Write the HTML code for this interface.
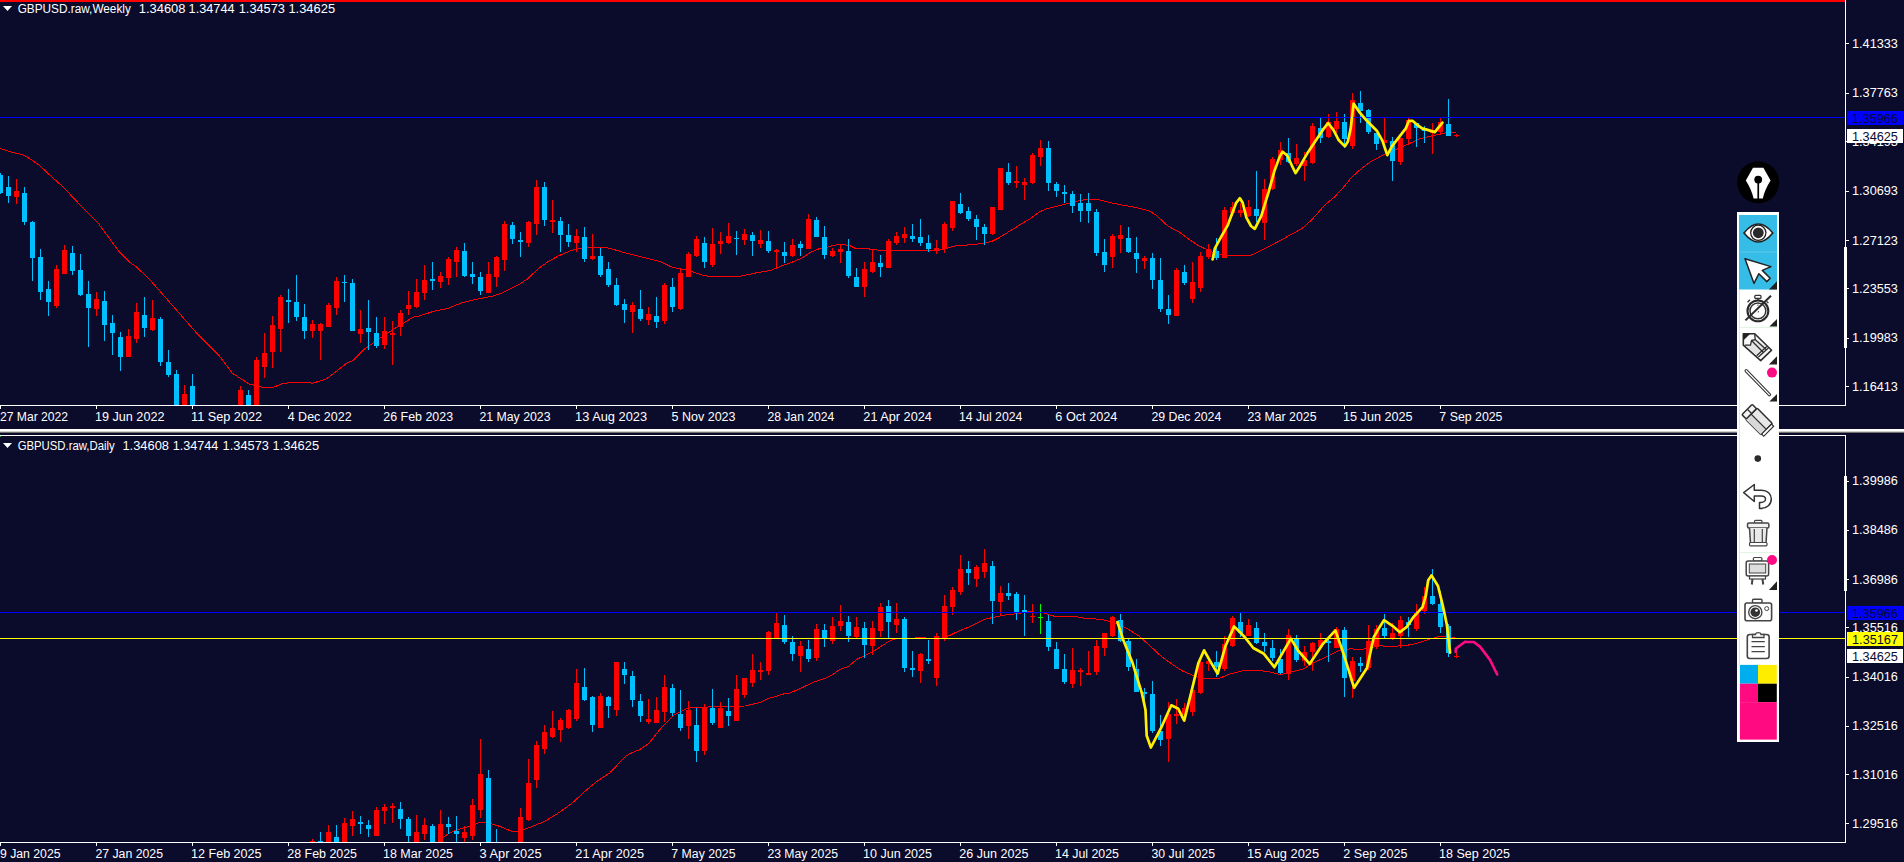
<!DOCTYPE html>
<html><head><meta charset="utf-8"><style>
html,body{margin:0;padding:0;width:1904px;height:862px;overflow:hidden;background:#0b0b2b}
svg{display:block}
text{font-family:"Liberation Sans",sans-serif;font-size:12.3px}
</style></head><body>
<svg width="1904" height="862" viewBox="0 0 1904 862">
<rect width="1904" height="862" fill="#0b0b2b"/>
<g shape-rendering="crispEdges">
<rect x="0" y="0" width="1845" height="2" fill="#ff0000"/>
</g>
<g>
<polyline points="0.0,148.4 11.1,152.1 22.3,154.5 29.7,158.6 39.0,165.0 52.0,177.1 60.3,184.5 68.7,192.9 84.5,209.6 98.4,223.5 111.4,241.2 119.7,252.3 129.9,262.5 135.5,266.2 148.5,278.3 160.0,291.3 180.5,314.7 197.8,334.4 212.6,349.3 219.2,355.9 232.4,373.2 248.8,383.9 262.0,387.2 273.5,387.2 281.8,383.9 291.7,382.2 313.1,383.1 326.2,379.0 336.1,371.5 347.6,362.5 352.6,360.8 364.1,349.3 380.6,337.8 397.0,327.0 413.5,317.1 420.0,315.8 433.9,311.2 447.8,308.4 461.8,302.8 475.7,299.4 493.8,295.9 503.5,292.4 517.5,285.4 527.2,279.2 538.3,268.7 548.1,261.5 559.2,255.5 573.1,249.9 581.5,248.3 588.5,247.4 603.8,247.4 610.7,248.5 621.9,252.0 635.8,255.5 649.7,259.0 660.0,261.4 672.5,267.4 685.1,269.8 694.8,272.6 704.5,275.8 710.1,276.3 739.4,276.3 757.5,272.6 771.4,270.2 781.1,266.0 792.3,262.1 802.0,258.0 810.4,252.4 818.7,248.9 827.1,247.5 832.6,245.4 841.0,244.3 849.3,245.4 854.9,248.2 868.8,248.9 878.6,250.3 900.0,250.3 939.0,250.3 947.3,248.2 955.7,245.7 972.4,244.7 983.5,243.3 991.9,241.3 1000.2,237.1 1011.4,230.1 1022.5,223.2 1030.9,218.3 1039.2,212.0 1047.6,208.5 1055.9,206.5 1067.1,203.7 1075.4,201.6 1086.5,199.2 1097.7,199.5 1108.8,202.3 1122.8,205.1 1140.0,208.3 1149.7,211.2 1156.2,215.3 1167.6,225.8 1180.6,233.1 1188.7,239.1 1198.5,245.6 1208.2,250.2 1218.0,254.7 1227.7,255.4 1250.4,255.4 1256.9,252.6 1269.9,246.1 1286.2,237.2 1302.4,228.3 1312.2,219.3 1325.2,204.7 1334.9,196.6 1344.6,186.0 1351.1,177.9 1360.9,169.0 1370.6,161.7 1380.0,156.8 1382.6,155.1 1394.2,150.4 1407.0,144.6 1419.8,138.8 1431.4,135.9 1445.3,133.0 1455.7,132.5" fill="none" stroke="#ff0000" stroke-width="1" stroke-linejoin="round" stroke-linecap="round" shape-rendering="crispEdges"/>
<polyline points="443.2,837.6 448.9,833.3 456.5,830.0 467.8,826.7 474.4,824.8 480.1,822.2 484.8,822.5 491.4,823.9 500.9,826.7 512.2,831.6 517.0,831.2 529.2,827.7 543.4,822.0 557.6,813.5 567.1,806.9 573.7,801.7 586.0,790.3 598.2,780.4 610.0,772.8 612.5,770.0 625.1,756.8 629.2,754.0 639.0,749.9 648.7,743.6 658.5,731.1 664.0,724.8 673.8,715.1 680.7,711.6 687.7,708.1 701.6,707.4 716.9,706.4 733.6,706.4 744.8,706.0 760.1,702.5 767.1,699.0 785.2,693.5 790.0,693.0 803.9,686.8 815.1,681.6 824.8,678.4 831.8,675.2 838.7,670.0 848.5,666.3 856.8,659.3 865.2,655.4 873.5,651.3 887.5,642.2 895.5,638.5 915.5,638.5 916.0,637.5 925.0,637.5 925.5,638.5 946.0,638.5 947.3,636.5 957.1,631.8 971.0,626.2 984.9,619.2 1005.8,614.8 1015.5,613.9 1030.0,611.6 1043.9,613.0 1055.1,616.5 1075.9,616.5 1085.7,618.5 1099.6,619.2 1108.0,620.9 1119.1,624.1 1130.2,630.4 1138.6,635.9 1148.3,644.3 1160.9,656.1 1173.4,665.2 1183.1,671.4 1197.1,677.0 1202.6,678.4 1219.3,678.4 1229.1,674.2 1245.8,670.0 1259.7,670.5 1270.0,672.0 1280.5,674.6 1291.0,672.0 1303.6,668.8 1314.1,662.5 1327.8,656.2 1338.3,651.0 1349.8,648.9 1362.4,649.4 1375.0,646.8 1380.3,645.7 1390.8,646.8 1401.3,645.7 1411.8,644.7 1419.2,642.6 1430.7,638.9 1438.1,636.8 1448.6,636.8 1454.9,637.5" fill="none" stroke="#ff0000" stroke-width="1" stroke-linejoin="round" stroke-linecap="round" shape-rendering="crispEdges"/>
</g>
<g shape-rendering="crispEdges">
<rect x="0" y="173" width="1" height="21" fill="#00bfff"/>
<rect x="-2" y="175" width="5" height="18" fill="#00bfff"/>
<rect x="8" y="176" width="1" height="27" fill="#00bfff"/>
<rect x="6" y="187" width="5" height="9" fill="#00bfff"/>
<rect x="16" y="179" width="1" height="25" fill="#ff0000"/>
<rect x="14" y="191" width="5" height="6" fill="#ff0000"/>
<rect x="24" y="187" width="1" height="38" fill="#00bfff"/>
<rect x="22" y="193" width="5" height="29" fill="#00bfff"/>
<rect x="32" y="221" width="1" height="60" fill="#00bfff"/>
<rect x="30" y="222" width="5" height="36" fill="#00bfff"/>
<rect x="40" y="249" width="1" height="51" fill="#00bfff"/>
<rect x="38" y="257" width="5" height="35" fill="#00bfff"/>
<rect x="48" y="281" width="1" height="35" fill="#00bfff"/>
<rect x="46" y="289" width="5" height="13" fill="#00bfff"/>
<rect x="56" y="265" width="1" height="43" fill="#ff0000"/>
<rect x="54" y="269" width="5" height="37" fill="#ff0000"/>
<rect x="64" y="245" width="1" height="29" fill="#ff0000"/>
<rect x="62" y="250" width="5" height="24" fill="#ff0000"/>
<rect x="72" y="246" width="1" height="29" fill="#00bfff"/>
<rect x="70" y="253" width="5" height="18" fill="#00bfff"/>
<rect x="80" y="254" width="1" height="42" fill="#00bfff"/>
<rect x="78" y="270" width="5" height="25" fill="#00bfff"/>
<rect x="88" y="281" width="1" height="66" fill="#00bfff"/>
<rect x="86" y="294" width="5" height="14" fill="#00bfff"/>
<rect x="96" y="292" width="1" height="24" fill="#ff0000"/>
<rect x="94" y="299" width="5" height="10" fill="#ff0000"/>
<rect x="104" y="291" width="1" height="50" fill="#00bfff"/>
<rect x="102" y="301" width="5" height="24" fill="#00bfff"/>
<rect x="112" y="315" width="1" height="40" fill="#00bfff"/>
<rect x="110" y="323" width="5" height="10" fill="#00bfff"/>
<rect x="120" y="332" width="1" height="39" fill="#00bfff"/>
<rect x="118" y="337" width="5" height="20" fill="#00bfff"/>
<rect x="128" y="329" width="1" height="28" fill="#ff0000"/>
<rect x="126" y="336" width="5" height="21" fill="#ff0000"/>
<rect x="136" y="303" width="1" height="40" fill="#ff0000"/>
<rect x="134" y="312" width="5" height="27" fill="#ff0000"/>
<rect x="144" y="297" width="1" height="40" fill="#00bfff"/>
<rect x="142" y="315" width="5" height="13" fill="#00bfff"/>
<rect x="152" y="300" width="1" height="31" fill="#ff0000"/>
<rect x="150" y="318" width="5" height="12" fill="#ff0000"/>
<rect x="160" y="317" width="1" height="49" fill="#00bfff"/>
<rect x="158" y="319" width="5" height="43" fill="#00bfff"/>
<rect x="168" y="350" width="1" height="27" fill="#00bfff"/>
<rect x="166" y="362" width="5" height="13" fill="#00bfff"/>
<rect x="176" y="370" width="1" height="35" fill="#00bfff"/>
<rect x="174" y="374" width="5" height="31" fill="#00bfff"/>
<rect x="184" y="385" width="1" height="20" fill="#ff0000"/>
<rect x="182" y="394" width="5" height="11" fill="#ff0000"/>
<rect x="192" y="374" width="1" height="31" fill="#00bfff"/>
<rect x="190" y="386" width="5" height="19" fill="#00bfff"/>
<rect x="240" y="386" width="1" height="19" fill="#ff0000"/>
<rect x="238" y="390" width="5" height="15" fill="#ff0000"/>
<rect x="248" y="390" width="1" height="15" fill="#00bfff"/>
<rect x="246" y="395" width="5" height="10" fill="#00bfff"/>
<rect x="256" y="357" width="1" height="48" fill="#ff0000"/>
<rect x="254" y="360" width="5" height="45" fill="#ff0000"/>
<rect x="264" y="333" width="1" height="45" fill="#ff0000"/>
<rect x="262" y="353" width="5" height="14" fill="#ff0000"/>
<rect x="272" y="316" width="1" height="52" fill="#ff0000"/>
<rect x="270" y="325" width="5" height="27" fill="#ff0000"/>
<rect x="280" y="295" width="1" height="57" fill="#ff0000"/>
<rect x="278" y="297" width="5" height="32" fill="#ff0000"/>
<rect x="288" y="289" width="1" height="34" fill="#00bfff"/>
<rect x="286" y="300" width="5" height="2" fill="#00bfff"/>
<rect x="296" y="275" width="1" height="46" fill="#00bfff"/>
<rect x="294" y="302" width="5" height="15" fill="#00bfff"/>
<rect x="304" y="304" width="1" height="35" fill="#00bfff"/>
<rect x="302" y="317" width="5" height="14" fill="#00bfff"/>
<rect x="312" y="320" width="1" height="18" fill="#ff0000"/>
<rect x="310" y="324" width="5" height="7" fill="#ff0000"/>
<rect x="320" y="323" width="1" height="37" fill="#ff0000"/>
<rect x="318" y="324" width="5" height="7" fill="#ff0000"/>
<rect x="328" y="303" width="1" height="24" fill="#ff0000"/>
<rect x="326" y="305" width="5" height="22" fill="#ff0000"/>
<rect x="336" y="277" width="1" height="38" fill="#ff0000"/>
<rect x="334" y="281" width="5" height="27" fill="#ff0000"/>
<rect x="344" y="275" width="1" height="27" fill="#00bfff"/>
<rect x="342" y="282" width="5" height="1" fill="#00bfff"/>
<rect x="352" y="279" width="1" height="52" fill="#00bfff"/>
<rect x="350" y="283" width="5" height="48" fill="#00bfff"/>
<rect x="360" y="310" width="1" height="33" fill="#ff0000"/>
<rect x="358" y="329" width="5" height="5" fill="#ff0000"/>
<rect x="368" y="300" width="1" height="50" fill="#00bfff"/>
<rect x="366" y="328" width="5" height="4" fill="#00bfff"/>
<rect x="376" y="317" width="1" height="31" fill="#00bfff"/>
<rect x="374" y="333" width="5" height="13" fill="#00bfff"/>
<rect x="384" y="317" width="1" height="32" fill="#ff0000"/>
<rect x="382" y="331" width="5" height="14" fill="#ff0000"/>
<rect x="392" y="321" width="1" height="44" fill="#ff0000"/>
<rect x="390" y="333" width="5" height="2" fill="#ff0000"/>
<rect x="400" y="310" width="1" height="26" fill="#ff0000"/>
<rect x="398" y="313" width="5" height="14" fill="#ff0000"/>
<rect x="408" y="291" width="1" height="24" fill="#ff0000"/>
<rect x="406" y="305" width="5" height="4" fill="#ff0000"/>
<rect x="416" y="279" width="1" height="29" fill="#ff0000"/>
<rect x="414" y="292" width="5" height="15" fill="#ff0000"/>
<rect x="424" y="265" width="1" height="35" fill="#ff0000"/>
<rect x="422" y="280" width="5" height="13" fill="#ff0000"/>
<rect x="432" y="262" width="1" height="28" fill="#00bfff"/>
<rect x="430" y="279" width="5" height="2" fill="#00bfff"/>
<rect x="440" y="272" width="1" height="16" fill="#ff0000"/>
<rect x="438" y="276" width="5" height="6" fill="#ff0000"/>
<rect x="448" y="257" width="1" height="28" fill="#ff0000"/>
<rect x="446" y="259" width="5" height="19" fill="#ff0000"/>
<rect x="456" y="247" width="1" height="30" fill="#ff0000"/>
<rect x="454" y="250" width="5" height="12" fill="#ff0000"/>
<rect x="464" y="243" width="1" height="34" fill="#00bfff"/>
<rect x="462" y="251" width="5" height="25" fill="#00bfff"/>
<rect x="472" y="262" width="1" height="22" fill="#00bfff"/>
<rect x="470" y="274" width="5" height="3" fill="#00bfff"/>
<rect x="480" y="272" width="1" height="23" fill="#00bfff"/>
<rect x="478" y="277" width="5" height="14" fill="#00bfff"/>
<rect x="488" y="262" width="1" height="31" fill="#ff0000"/>
<rect x="486" y="274" width="5" height="19" fill="#ff0000"/>
<rect x="496" y="256" width="1" height="31" fill="#ff0000"/>
<rect x="494" y="257" width="5" height="20" fill="#ff0000"/>
<rect x="504" y="221" width="1" height="50" fill="#ff0000"/>
<rect x="502" y="224" width="5" height="36" fill="#ff0000"/>
<rect x="512" y="222" width="1" height="22" fill="#00bfff"/>
<rect x="510" y="225" width="5" height="14" fill="#00bfff"/>
<rect x="520" y="232" width="1" height="25" fill="#00bfff"/>
<rect x="518" y="240" width="5" height="2" fill="#00bfff"/>
<rect x="528" y="221" width="1" height="26" fill="#ff0000"/>
<rect x="526" y="222" width="5" height="21" fill="#ff0000"/>
<rect x="536" y="180" width="1" height="55" fill="#ff0000"/>
<rect x="534" y="187" width="5" height="37" fill="#ff0000"/>
<rect x="544" y="182" width="1" height="44" fill="#00bfff"/>
<rect x="542" y="187" width="5" height="33" fill="#00bfff"/>
<rect x="552" y="200" width="1" height="33" fill="#ff0000"/>
<rect x="550" y="220" width="5" height="2" fill="#ff0000"/>
<rect x="560" y="217" width="1" height="35" fill="#00bfff"/>
<rect x="558" y="221" width="5" height="14" fill="#00bfff"/>
<rect x="568" y="224" width="1" height="23" fill="#00bfff"/>
<rect x="566" y="235" width="5" height="7" fill="#00bfff"/>
<rect x="576" y="229" width="1" height="23" fill="#ff0000"/>
<rect x="574" y="236" width="5" height="7" fill="#ff0000"/>
<rect x="584" y="227" width="1" height="35" fill="#00bfff"/>
<rect x="582" y="237" width="5" height="22" fill="#00bfff"/>
<rect x="592" y="234" width="1" height="26" fill="#ff0000"/>
<rect x="590" y="256" width="5" height="3" fill="#ff0000"/>
<rect x="600" y="248" width="1" height="29" fill="#00bfff"/>
<rect x="598" y="256" width="5" height="19" fill="#00bfff"/>
<rect x="608" y="262" width="1" height="25" fill="#00bfff"/>
<rect x="606" y="269" width="5" height="16" fill="#00bfff"/>
<rect x="616" y="278" width="1" height="28" fill="#00bfff"/>
<rect x="614" y="285" width="5" height="20" fill="#00bfff"/>
<rect x="624" y="299" width="1" height="24" fill="#00bfff"/>
<rect x="622" y="304" width="5" height="6" fill="#00bfff"/>
<rect x="632" y="302" width="1" height="31" fill="#ff0000"/>
<rect x="630" y="305" width="5" height="7" fill="#ff0000"/>
<rect x="640" y="290" width="1" height="31" fill="#00bfff"/>
<rect x="638" y="309" width="5" height="10" fill="#00bfff"/>
<rect x="648" y="307" width="1" height="18" fill="#ff0000"/>
<rect x="646" y="314" width="5" height="6" fill="#ff0000"/>
<rect x="656" y="297" width="1" height="31" fill="#00bfff"/>
<rect x="654" y="316" width="5" height="6" fill="#00bfff"/>
<rect x="664" y="283" width="1" height="41" fill="#ff0000"/>
<rect x="662" y="285" width="5" height="36" fill="#ff0000"/>
<rect x="672" y="278" width="1" height="34" fill="#00bfff"/>
<rect x="670" y="287" width="5" height="20" fill="#00bfff"/>
<rect x="680" y="268" width="1" height="42" fill="#ff0000"/>
<rect x="678" y="273" width="5" height="36" fill="#ff0000"/>
<rect x="688" y="252" width="1" height="25" fill="#ff0000"/>
<rect x="686" y="254" width="5" height="23" fill="#ff0000"/>
<rect x="696" y="236" width="1" height="21" fill="#ff0000"/>
<rect x="694" y="239" width="5" height="17" fill="#ff0000"/>
<rect x="704" y="237" width="1" height="31" fill="#00bfff"/>
<rect x="702" y="243" width="5" height="19" fill="#00bfff"/>
<rect x="712" y="228" width="1" height="39" fill="#ff0000"/>
<rect x="710" y="244" width="5" height="21" fill="#ff0000"/>
<rect x="720" y="232" width="1" height="22" fill="#ff0000"/>
<rect x="718" y="241" width="5" height="3" fill="#ff0000"/>
<rect x="728" y="223" width="1" height="21" fill="#ff0000"/>
<rect x="726" y="236" width="5" height="7" fill="#ff0000"/>
<rect x="736" y="231" width="1" height="24" fill="#00bfff"/>
<rect x="734" y="238" width="5" height="1" fill="#00bfff"/>
<rect x="744" y="229" width="1" height="16" fill="#ff0000"/>
<rect x="742" y="234" width="5" height="6" fill="#ff0000"/>
<rect x="752" y="232" width="1" height="24" fill="#00bfff"/>
<rect x="750" y="235" width="5" height="6" fill="#00bfff"/>
<rect x="760" y="230" width="1" height="18" fill="#ff0000"/>
<rect x="758" y="240" width="5" height="4" fill="#ff0000"/>
<rect x="768" y="231" width="1" height="22" fill="#00bfff"/>
<rect x="766" y="241" width="5" height="10" fill="#00bfff"/>
<rect x="776" y="249" width="1" height="18" fill="#ff0000"/>
<rect x="774" y="250" width="5" height="2" fill="#ff0000"/>
<rect x="784" y="242" width="1" height="21" fill="#00bfff"/>
<rect x="782" y="252" width="5" height="4" fill="#00bfff"/>
<rect x="792" y="239" width="1" height="18" fill="#ff0000"/>
<rect x="790" y="245" width="5" height="11" fill="#ff0000"/>
<rect x="800" y="241" width="1" height="15" fill="#00bfff"/>
<rect x="798" y="244" width="5" height="4" fill="#00bfff"/>
<rect x="808" y="214" width="1" height="35" fill="#ff0000"/>
<rect x="806" y="219" width="5" height="30" fill="#ff0000"/>
<rect x="816" y="217" width="1" height="20" fill="#00bfff"/>
<rect x="814" y="220" width="5" height="17" fill="#00bfff"/>
<rect x="824" y="226" width="1" height="33" fill="#00bfff"/>
<rect x="822" y="237" width="5" height="18" fill="#00bfff"/>
<rect x="832" y="248" width="1" height="9" fill="#ff0000"/>
<rect x="830" y="251" width="5" height="5" fill="#ff0000"/>
<rect x="840" y="244" width="1" height="19" fill="#ff0000"/>
<rect x="838" y="249" width="5" height="3" fill="#ff0000"/>
<rect x="848" y="239" width="1" height="39" fill="#00bfff"/>
<rect x="846" y="251" width="5" height="25" fill="#00bfff"/>
<rect x="856" y="268" width="1" height="19" fill="#00bfff"/>
<rect x="854" y="277" width="5" height="10" fill="#00bfff"/>
<rect x="864" y="262" width="1" height="35" fill="#ff0000"/>
<rect x="862" y="269" width="5" height="18" fill="#ff0000"/>
<rect x="872" y="249" width="1" height="24" fill="#ff0000"/>
<rect x="870" y="262" width="5" height="10" fill="#ff0000"/>
<rect x="880" y="255" width="1" height="22" fill="#00bfff"/>
<rect x="878" y="263" width="5" height="4" fill="#00bfff"/>
<rect x="888" y="239" width="1" height="29" fill="#ff0000"/>
<rect x="886" y="241" width="5" height="27" fill="#ff0000"/>
<rect x="896" y="232" width="1" height="13" fill="#ff0000"/>
<rect x="894" y="236" width="5" height="7" fill="#ff0000"/>
<rect x="904" y="227" width="1" height="16" fill="#ff0000"/>
<rect x="902" y="234" width="5" height="4" fill="#ff0000"/>
<rect x="912" y="224" width="1" height="18" fill="#00bfff"/>
<rect x="910" y="236" width="5" height="3" fill="#00bfff"/>
<rect x="920" y="219" width="1" height="27" fill="#00bfff"/>
<rect x="918" y="237" width="5" height="6" fill="#00bfff"/>
<rect x="928" y="235" width="1" height="17" fill="#00bfff"/>
<rect x="926" y="243" width="5" height="6" fill="#00bfff"/>
<rect x="936" y="240" width="1" height="14" fill="#ff0000"/>
<rect x="934" y="248" width="5" height="3" fill="#ff0000"/>
<rect x="944" y="222" width="1" height="31" fill="#ff0000"/>
<rect x="942" y="224" width="5" height="25" fill="#ff0000"/>
<rect x="952" y="201" width="1" height="30" fill="#ff0000"/>
<rect x="950" y="201" width="5" height="27" fill="#ff0000"/>
<rect x="960" y="193" width="1" height="21" fill="#00bfff"/>
<rect x="958" y="204" width="5" height="9" fill="#00bfff"/>
<rect x="968" y="207" width="1" height="14" fill="#00bfff"/>
<rect x="966" y="211" width="5" height="8" fill="#00bfff"/>
<rect x="976" y="215" width="1" height="25" fill="#00bfff"/>
<rect x="974" y="219" width="5" height="8" fill="#00bfff"/>
<rect x="984" y="224" width="1" height="21" fill="#00bfff"/>
<rect x="982" y="227" width="5" height="7" fill="#00bfff"/>
<rect x="992" y="207" width="1" height="28" fill="#ff0000"/>
<rect x="990" y="207" width="5" height="27" fill="#ff0000"/>
<rect x="1000" y="168" width="1" height="42" fill="#ff0000"/>
<rect x="998" y="168" width="5" height="42" fill="#ff0000"/>
<rect x="1008" y="163" width="1" height="22" fill="#00bfff"/>
<rect x="1006" y="172" width="5" height="11" fill="#00bfff"/>
<rect x="1016" y="166" width="1" height="22" fill="#ff0000"/>
<rect x="1014" y="181" width="5" height="2" fill="#ff0000"/>
<rect x="1024" y="178" width="1" height="22" fill="#ff0000"/>
<rect x="1022" y="182" width="5" height="3" fill="#ff0000"/>
<rect x="1032" y="153" width="1" height="31" fill="#ff0000"/>
<rect x="1030" y="155" width="5" height="28" fill="#ff0000"/>
<rect x="1040" y="140" width="1" height="26" fill="#ff0000"/>
<rect x="1038" y="148" width="5" height="9" fill="#ff0000"/>
<rect x="1048" y="141" width="1" height="50" fill="#00bfff"/>
<rect x="1046" y="148" width="5" height="35" fill="#00bfff"/>
<rect x="1056" y="182" width="1" height="15" fill="#00bfff"/>
<rect x="1054" y="184" width="5" height="7" fill="#00bfff"/>
<rect x="1064" y="185" width="1" height="18" fill="#00bfff"/>
<rect x="1062" y="192" width="5" height="2" fill="#00bfff"/>
<rect x="1072" y="191" width="1" height="22" fill="#00bfff"/>
<rect x="1070" y="194" width="5" height="12" fill="#00bfff"/>
<rect x="1080" y="194" width="1" height="28" fill="#00bfff"/>
<rect x="1078" y="203" width="5" height="8" fill="#00bfff"/>
<rect x="1088" y="193" width="1" height="30" fill="#00bfff"/>
<rect x="1086" y="203" width="5" height="8" fill="#00bfff"/>
<rect x="1096" y="209" width="1" height="47" fill="#00bfff"/>
<rect x="1094" y="212" width="5" height="41" fill="#00bfff"/>
<rect x="1104" y="239" width="1" height="33" fill="#00bfff"/>
<rect x="1102" y="252" width="5" height="13" fill="#00bfff"/>
<rect x="1112" y="234" width="1" height="34" fill="#ff0000"/>
<rect x="1110" y="236" width="5" height="21" fill="#ff0000"/>
<rect x="1120" y="225" width="1" height="28" fill="#ff0000"/>
<rect x="1118" y="235" width="5" height="4" fill="#ff0000"/>
<rect x="1128" y="227" width="1" height="26" fill="#00bfff"/>
<rect x="1126" y="238" width="5" height="14" fill="#00bfff"/>
<rect x="1136" y="237" width="1" height="36" fill="#00bfff"/>
<rect x="1134" y="253" width="5" height="6" fill="#00bfff"/>
<rect x="1144" y="256" width="1" height="13" fill="#ff0000"/>
<rect x="1142" y="258" width="5" height="3" fill="#ff0000"/>
<rect x="1152" y="253" width="1" height="36" fill="#00bfff"/>
<rect x="1150" y="258" width="5" height="22" fill="#00bfff"/>
<rect x="1160" y="258" width="1" height="54" fill="#00bfff"/>
<rect x="1158" y="280" width="5" height="29" fill="#00bfff"/>
<rect x="1168" y="295" width="1" height="29" fill="#00bfff"/>
<rect x="1166" y="309" width="5" height="6" fill="#00bfff"/>
<rect x="1176" y="268" width="1" height="48" fill="#ff0000"/>
<rect x="1174" y="270" width="5" height="46" fill="#ff0000"/>
<rect x="1184" y="265" width="1" height="20" fill="#00bfff"/>
<rect x="1182" y="272" width="5" height="11" fill="#00bfff"/>
<rect x="1192" y="262" width="1" height="41" fill="#ff0000"/>
<rect x="1190" y="282" width="5" height="17" fill="#ff0000"/>
<rect x="1200" y="252" width="1" height="40" fill="#ff0000"/>
<rect x="1198" y="256" width="5" height="32" fill="#ff0000"/>
<rect x="1208" y="244" width="1" height="15" fill="#ff0000"/>
<rect x="1206" y="249" width="5" height="8" fill="#ff0000"/>
<rect x="1216" y="238" width="1" height="22" fill="#00bfff"/>
<rect x="1214" y="251" width="5" height="7" fill="#00bfff"/>
<rect x="1224" y="207" width="1" height="51" fill="#ff0000"/>
<rect x="1222" y="210" width="5" height="48" fill="#ff0000"/>
<rect x="1232" y="202" width="1" height="14" fill="#ff0000"/>
<rect x="1230" y="207" width="5" height="6" fill="#ff0000"/>
<rect x="1240" y="203" width="1" height="14" fill="#ff0000"/>
<rect x="1238" y="210" width="5" height="3" fill="#ff0000"/>
<rect x="1248" y="200" width="1" height="17" fill="#ff0000"/>
<rect x="1246" y="207" width="5" height="9" fill="#ff0000"/>
<rect x="1256" y="171" width="1" height="51" fill="#00bfff"/>
<rect x="1254" y="209" width="5" height="7" fill="#00bfff"/>
<rect x="1264" y="179" width="1" height="61" fill="#ff0000"/>
<rect x="1262" y="189" width="5" height="34" fill="#ff0000"/>
<rect x="1272" y="157" width="1" height="33" fill="#ff0000"/>
<rect x="1270" y="159" width="5" height="30" fill="#ff0000"/>
<rect x="1280" y="142" width="1" height="23" fill="#ff0000"/>
<rect x="1278" y="150" width="5" height="10" fill="#ff0000"/>
<rect x="1288" y="138" width="1" height="25" fill="#00bfff"/>
<rect x="1286" y="153" width="5" height="9" fill="#00bfff"/>
<rect x="1296" y="144" width="1" height="22" fill="#ff0000"/>
<rect x="1294" y="158" width="5" height="6" fill="#ff0000"/>
<rect x="1304" y="152" width="1" height="29" fill="#ff0000"/>
<rect x="1302" y="160" width="5" height="6" fill="#ff0000"/>
<rect x="1312" y="123" width="1" height="41" fill="#ff0000"/>
<rect x="1310" y="126" width="5" height="37" fill="#ff0000"/>
<rect x="1320" y="118" width="1" height="25" fill="#00bfff"/>
<rect x="1318" y="128" width="5" height="10" fill="#00bfff"/>
<rect x="1328" y="114" width="1" height="24" fill="#ff0000"/>
<rect x="1326" y="122" width="5" height="15" fill="#ff0000"/>
<rect x="1336" y="112" width="1" height="21" fill="#ff0000"/>
<rect x="1334" y="121" width="5" height="8" fill="#ff0000"/>
<rect x="1344" y="114" width="1" height="34" fill="#00bfff"/>
<rect x="1342" y="122" width="5" height="17" fill="#00bfff"/>
<rect x="1352" y="93" width="1" height="56" fill="#ff0000"/>
<rect x="1350" y="100" width="5" height="46" fill="#ff0000"/>
<rect x="1360" y="91" width="1" height="32" fill="#00bfff"/>
<rect x="1358" y="103" width="5" height="8" fill="#00bfff"/>
<rect x="1368" y="109" width="1" height="25" fill="#00bfff"/>
<rect x="1366" y="110" width="5" height="22" fill="#00bfff"/>
<rect x="1376" y="133" width="1" height="17" fill="#00bfff"/>
<rect x="1374" y="133" width="5" height="11" fill="#00bfff"/>
<rect x="1384" y="118" width="1" height="25" fill="#ff0000"/>
<rect x="1382" y="140" width="5" height="3" fill="#ff0000"/>
<rect x="1392" y="137" width="1" height="44" fill="#00bfff"/>
<rect x="1390" y="141" width="5" height="20" fill="#00bfff"/>
<rect x="1400" y="138" width="1" height="27" fill="#ff0000"/>
<rect x="1398" y="138" width="5" height="24" fill="#ff0000"/>
<rect x="1408" y="118" width="1" height="27" fill="#ff0000"/>
<rect x="1406" y="120" width="5" height="19" fill="#ff0000"/>
<rect x="1416" y="123" width="1" height="24" fill="#00bfff"/>
<rect x="1414" y="123" width="5" height="5" fill="#00bfff"/>
<rect x="1424" y="126" width="1" height="17" fill="#00bfff"/>
<rect x="1422" y="128" width="5" height="3" fill="#00bfff"/>
<rect x="1432" y="123" width="1" height="31" fill="#ff0000"/>
<rect x="1430" y="130" width="5" height="3" fill="#ff0000"/>
<rect x="1440" y="118" width="1" height="15" fill="#ff0000"/>
<rect x="1438" y="122" width="5" height="10" fill="#ff0000"/>
<rect x="1448" y="99" width="1" height="37" fill="#00bfff"/>
<rect x="1446" y="124" width="5" height="12" fill="#00bfff"/>
<rect x="1456" y="134" width="1" height="3" fill="#ff0000"/>
<rect x="1454" y="135" width="5" height="1" fill="#ff0000"/>
<rect x="312" y="839" width="1" height="3" fill="#ff0000"/>
<rect x="310" y="841" width="5" height="1" fill="#ff0000"/>
<rect x="320" y="832" width="1" height="10" fill="#00bfff"/>
<rect x="318" y="841" width="5" height="1" fill="#00bfff"/>
<rect x="328" y="825" width="1" height="17" fill="#ff0000"/>
<rect x="326" y="832" width="5" height="10" fill="#ff0000"/>
<rect x="336" y="825" width="1" height="17" fill="#00bfff"/>
<rect x="334" y="837" width="5" height="5" fill="#00bfff"/>
<rect x="344" y="818" width="1" height="24" fill="#ff0000"/>
<rect x="342" y="823" width="5" height="19" fill="#ff0000"/>
<rect x="352" y="811" width="1" height="25" fill="#ff0000"/>
<rect x="350" y="819" width="5" height="7" fill="#ff0000"/>
<rect x="360" y="816" width="1" height="18" fill="#00bfff"/>
<rect x="358" y="822" width="5" height="2" fill="#00bfff"/>
<rect x="368" y="820" width="1" height="17" fill="#00bfff"/>
<rect x="366" y="825" width="5" height="4" fill="#00bfff"/>
<rect x="376" y="807" width="1" height="29" fill="#ff0000"/>
<rect x="374" y="810" width="5" height="26" fill="#ff0000"/>
<rect x="384" y="804" width="1" height="20" fill="#ff0000"/>
<rect x="382" y="807" width="5" height="4" fill="#ff0000"/>
<rect x="392" y="803" width="1" height="20" fill="#ff0000"/>
<rect x="390" y="806" width="5" height="2" fill="#ff0000"/>
<rect x="400" y="802" width="1" height="27" fill="#00bfff"/>
<rect x="398" y="809" width="5" height="10" fill="#00bfff"/>
<rect x="408" y="817" width="1" height="25" fill="#00bfff"/>
<rect x="406" y="819" width="5" height="17" fill="#00bfff"/>
<rect x="416" y="815" width="1" height="27" fill="#ff0000"/>
<rect x="414" y="832" width="5" height="10" fill="#ff0000"/>
<rect x="424" y="818" width="1" height="22" fill="#ff0000"/>
<rect x="422" y="825" width="5" height="9" fill="#ff0000"/>
<rect x="432" y="824" width="1" height="18" fill="#00bfff"/>
<rect x="430" y="826" width="5" height="16" fill="#00bfff"/>
<rect x="440" y="810" width="1" height="32" fill="#ff0000"/>
<rect x="438" y="824" width="5" height="18" fill="#ff0000"/>
<rect x="448" y="817" width="1" height="17" fill="#00bfff"/>
<rect x="446" y="824" width="5" height="3" fill="#00bfff"/>
<rect x="456" y="816" width="1" height="26" fill="#00bfff"/>
<rect x="454" y="831" width="5" height="3" fill="#00bfff"/>
<rect x="464" y="826" width="1" height="16" fill="#ff0000"/>
<rect x="462" y="832" width="5" height="6" fill="#ff0000"/>
<rect x="472" y="799" width="1" height="41" fill="#ff0000"/>
<rect x="470" y="805" width="5" height="31" fill="#ff0000"/>
<rect x="480" y="739" width="1" height="79" fill="#ff0000"/>
<rect x="478" y="774" width="5" height="36" fill="#ff0000"/>
<rect x="488" y="770" width="1" height="72" fill="#00bfff"/>
<rect x="486" y="778" width="5" height="64" fill="#00bfff"/>
<rect x="496" y="829" width="1" height="13" fill="#00bfff"/>
<rect x="520" y="808" width="1" height="34" fill="#ff0000"/>
<rect x="518" y="817" width="5" height="25" fill="#ff0000"/>
<rect x="528" y="759" width="1" height="62" fill="#ff0000"/>
<rect x="526" y="783" width="5" height="37" fill="#ff0000"/>
<rect x="536" y="741" width="1" height="47" fill="#ff0000"/>
<rect x="534" y="745" width="5" height="35" fill="#ff0000"/>
<rect x="544" y="725" width="1" height="29" fill="#ff0000"/>
<rect x="542" y="732" width="5" height="17" fill="#ff0000"/>
<rect x="552" y="711" width="1" height="27" fill="#ff0000"/>
<rect x="550" y="728" width="5" height="9" fill="#ff0000"/>
<rect x="560" y="718" width="1" height="24" fill="#ff0000"/>
<rect x="558" y="720" width="5" height="10" fill="#ff0000"/>
<rect x="568" y="709" width="1" height="20" fill="#ff0000"/>
<rect x="566" y="710" width="5" height="18" fill="#ff0000"/>
<rect x="576" y="669" width="1" height="52" fill="#ff0000"/>
<rect x="574" y="683" width="5" height="36" fill="#ff0000"/>
<rect x="584" y="668" width="1" height="33" fill="#00bfff"/>
<rect x="582" y="687" width="5" height="13" fill="#00bfff"/>
<rect x="592" y="696" width="1" height="36" fill="#00bfff"/>
<rect x="590" y="697" width="5" height="28" fill="#00bfff"/>
<rect x="600" y="693" width="1" height="35" fill="#ff0000"/>
<rect x="598" y="696" width="5" height="32" fill="#ff0000"/>
<rect x="608" y="696" width="1" height="22" fill="#00bfff"/>
<rect x="606" y="697" width="5" height="9" fill="#00bfff"/>
<rect x="616" y="662" width="1" height="54" fill="#ff0000"/>
<rect x="614" y="662" width="5" height="48" fill="#ff0000"/>
<rect x="624" y="662" width="1" height="22" fill="#00bfff"/>
<rect x="622" y="669" width="5" height="6" fill="#00bfff"/>
<rect x="632" y="671" width="1" height="36" fill="#00bfff"/>
<rect x="630" y="676" width="5" height="24" fill="#00bfff"/>
<rect x="640" y="694" width="1" height="28" fill="#00bfff"/>
<rect x="638" y="701" width="5" height="15" fill="#00bfff"/>
<rect x="648" y="699" width="1" height="25" fill="#ff0000"/>
<rect x="646" y="719" width="5" height="3" fill="#ff0000"/>
<rect x="656" y="697" width="1" height="26" fill="#ff0000"/>
<rect x="654" y="710" width="5" height="13" fill="#ff0000"/>
<rect x="664" y="675" width="1" height="47" fill="#ff0000"/>
<rect x="662" y="687" width="5" height="25" fill="#ff0000"/>
<rect x="672" y="684" width="1" height="32" fill="#00bfff"/>
<rect x="670" y="688" width="5" height="25" fill="#00bfff"/>
<rect x="680" y="690" width="1" height="41" fill="#00bfff"/>
<rect x="678" y="714" width="5" height="14" fill="#00bfff"/>
<rect x="688" y="701" width="1" height="38" fill="#ff0000"/>
<rect x="686" y="710" width="5" height="16" fill="#ff0000"/>
<rect x="696" y="708" width="1" height="54" fill="#00bfff"/>
<rect x="694" y="725" width="5" height="26" fill="#00bfff"/>
<rect x="704" y="704" width="1" height="51" fill="#ff0000"/>
<rect x="702" y="707" width="5" height="44" fill="#ff0000"/>
<rect x="712" y="689" width="1" height="36" fill="#00bfff"/>
<rect x="710" y="708" width="5" height="15" fill="#00bfff"/>
<rect x="720" y="702" width="1" height="26" fill="#ff0000"/>
<rect x="718" y="708" width="5" height="20" fill="#ff0000"/>
<rect x="728" y="698" width="1" height="28" fill="#00bfff"/>
<rect x="726" y="711" width="5" height="5" fill="#00bfff"/>
<rect x="736" y="675" width="1" height="46" fill="#ff0000"/>
<rect x="734" y="689" width="5" height="32" fill="#ff0000"/>
<rect x="744" y="678" width="1" height="20" fill="#ff0000"/>
<rect x="742" y="678" width="5" height="17" fill="#ff0000"/>
<rect x="752" y="654" width="1" height="33" fill="#ff0000"/>
<rect x="750" y="670" width="5" height="13" fill="#ff0000"/>
<rect x="760" y="662" width="1" height="18" fill="#ff0000"/>
<rect x="758" y="670" width="5" height="2" fill="#ff0000"/>
<rect x="768" y="631" width="1" height="44" fill="#ff0000"/>
<rect x="766" y="632" width="5" height="39" fill="#ff0000"/>
<rect x="776" y="613" width="1" height="26" fill="#ff0000"/>
<rect x="774" y="623" width="5" height="15" fill="#ff0000"/>
<rect x="784" y="615" width="1" height="29" fill="#00bfff"/>
<rect x="782" y="625" width="5" height="17" fill="#00bfff"/>
<rect x="792" y="636" width="1" height="25" fill="#00bfff"/>
<rect x="790" y="642" width="5" height="12" fill="#00bfff"/>
<rect x="800" y="641" width="1" height="31" fill="#ff0000"/>
<rect x="798" y="646" width="5" height="10" fill="#ff0000"/>
<rect x="808" y="640" width="1" height="22" fill="#00bfff"/>
<rect x="806" y="649" width="5" height="10" fill="#00bfff"/>
<rect x="816" y="624" width="1" height="37" fill="#ff0000"/>
<rect x="814" y="629" width="5" height="29" fill="#ff0000"/>
<rect x="824" y="624" width="1" height="23" fill="#00bfff"/>
<rect x="822" y="630" width="5" height="8" fill="#00bfff"/>
<rect x="832" y="617" width="1" height="27" fill="#ff0000"/>
<rect x="830" y="626" width="5" height="15" fill="#ff0000"/>
<rect x="840" y="605" width="1" height="26" fill="#ff0000"/>
<rect x="838" y="621" width="5" height="5" fill="#ff0000"/>
<rect x="848" y="616" width="1" height="26" fill="#00bfff"/>
<rect x="846" y="622" width="5" height="14" fill="#00bfff"/>
<rect x="856" y="617" width="1" height="21" fill="#ff0000"/>
<rect x="854" y="627" width="5" height="10" fill="#ff0000"/>
<rect x="864" y="622" width="1" height="36" fill="#00bfff"/>
<rect x="862" y="628" width="5" height="17" fill="#00bfff"/>
<rect x="872" y="621" width="1" height="34" fill="#ff0000"/>
<rect x="870" y="628" width="5" height="18" fill="#ff0000"/>
<rect x="880" y="603" width="1" height="34" fill="#ff0000"/>
<rect x="878" y="607" width="5" height="24" fill="#ff0000"/>
<rect x="888" y="600" width="1" height="38" fill="#00bfff"/>
<rect x="886" y="606" width="5" height="16" fill="#00bfff"/>
<rect x="896" y="603" width="1" height="30" fill="#ff0000"/>
<rect x="894" y="619" width="5" height="6" fill="#ff0000"/>
<rect x="904" y="617" width="1" height="55" fill="#00bfff"/>
<rect x="902" y="619" width="5" height="49" fill="#00bfff"/>
<rect x="912" y="651" width="1" height="26" fill="#00bfff"/>
<rect x="910" y="668" width="5" height="2" fill="#00bfff"/>
<rect x="920" y="653" width="1" height="30" fill="#ff0000"/>
<rect x="918" y="654" width="5" height="17" fill="#ff0000"/>
<rect x="928" y="640" width="1" height="24" fill="#00bfff"/>
<rect x="926" y="659" width="5" height="2" fill="#00bfff"/>
<rect x="936" y="633" width="1" height="53" fill="#ff0000"/>
<rect x="934" y="636" width="5" height="42" fill="#ff0000"/>
<rect x="944" y="595" width="1" height="46" fill="#ff0000"/>
<rect x="942" y="606" width="5" height="32" fill="#ff0000"/>
<rect x="952" y="587" width="1" height="28" fill="#ff0000"/>
<rect x="950" y="590" width="5" height="17" fill="#ff0000"/>
<rect x="960" y="555" width="1" height="40" fill="#ff0000"/>
<rect x="958" y="569" width="5" height="23" fill="#ff0000"/>
<rect x="968" y="561" width="1" height="24" fill="#00bfff"/>
<rect x="966" y="569" width="5" height="4" fill="#00bfff"/>
<rect x="976" y="565" width="1" height="22" fill="#ff0000"/>
<rect x="974" y="567" width="5" height="12" fill="#ff0000"/>
<rect x="984" y="549" width="1" height="29" fill="#ff0000"/>
<rect x="982" y="563" width="5" height="9" fill="#ff0000"/>
<rect x="992" y="561" width="1" height="63" fill="#00bfff"/>
<rect x="990" y="566" width="5" height="35" fill="#00bfff"/>
<rect x="1000" y="586" width="1" height="30" fill="#ff0000"/>
<rect x="998" y="593" width="5" height="9" fill="#ff0000"/>
<rect x="1008" y="583" width="1" height="17" fill="#00bfff"/>
<rect x="1006" y="593" width="5" height="3" fill="#00bfff"/>
<rect x="1016" y="592" width="1" height="28" fill="#00bfff"/>
<rect x="1014" y="594" width="5" height="18" fill="#00bfff"/>
<rect x="1024" y="595" width="1" height="41" fill="#00bfff"/>
<rect x="1022" y="610" width="5" height="3" fill="#00bfff"/>
<rect x="1032" y="604" width="1" height="19" fill="#ff0000"/>
<rect x="1030" y="616" width="5" height="1" fill="#ff0000"/>
<rect x="1040" y="604" width="1" height="30" fill="#00ff00"/>
<rect x="1038" y="617" width="5" height="1" fill="#00ff00"/>
<rect x="1048" y="615" width="1" height="36" fill="#00bfff"/>
<rect x="1046" y="621" width="5" height="26" fill="#00bfff"/>
<rect x="1056" y="642" width="1" height="27" fill="#00bfff"/>
<rect x="1054" y="649" width="5" height="20" fill="#00bfff"/>
<rect x="1064" y="654" width="1" height="30" fill="#00bfff"/>
<rect x="1062" y="669" width="5" height="13" fill="#00bfff"/>
<rect x="1072" y="648" width="1" height="40" fill="#ff0000"/>
<rect x="1070" y="670" width="5" height="14" fill="#ff0000"/>
<rect x="1080" y="668" width="1" height="18" fill="#ff0000"/>
<rect x="1078" y="670" width="5" height="2" fill="#ff0000"/>
<rect x="1088" y="651" width="1" height="24" fill="#ff0000"/>
<rect x="1086" y="673" width="5" height="2" fill="#ff0000"/>
<rect x="1096" y="640" width="1" height="35" fill="#ff0000"/>
<rect x="1094" y="646" width="5" height="26" fill="#ff0000"/>
<rect x="1104" y="633" width="1" height="23" fill="#ff0000"/>
<rect x="1102" y="633" width="5" height="15" fill="#ff0000"/>
<rect x="1112" y="616" width="1" height="21" fill="#ff0000"/>
<rect x="1110" y="617" width="5" height="19" fill="#ff0000"/>
<rect x="1120" y="614" width="1" height="28" fill="#00bfff"/>
<rect x="1118" y="620" width="5" height="21" fill="#00bfff"/>
<rect x="1128" y="639" width="1" height="32" fill="#00bfff"/>
<rect x="1126" y="641" width="5" height="26" fill="#00bfff"/>
<rect x="1136" y="659" width="1" height="33" fill="#00bfff"/>
<rect x="1134" y="669" width="5" height="23" fill="#00bfff"/>
<rect x="1144" y="688" width="1" height="15" fill="#00bfff"/>
<rect x="1142" y="692" width="5" height="2" fill="#00bfff"/>
<rect x="1152" y="681" width="1" height="52" fill="#00bfff"/>
<rect x="1150" y="694" width="5" height="37" fill="#00bfff"/>
<rect x="1160" y="715" width="1" height="31" fill="#00bfff"/>
<rect x="1158" y="731" width="5" height="9" fill="#00bfff"/>
<rect x="1168" y="702" width="1" height="60" fill="#ff0000"/>
<rect x="1166" y="714" width="5" height="25" fill="#ff0000"/>
<rect x="1176" y="699" width="1" height="25" fill="#ff0000"/>
<rect x="1174" y="714" width="5" height="2" fill="#ff0000"/>
<rect x="1184" y="703" width="1" height="19" fill="#ff0000"/>
<rect x="1182" y="708" width="5" height="7" fill="#ff0000"/>
<rect x="1192" y="689" width="1" height="27" fill="#ff0000"/>
<rect x="1190" y="690" width="5" height="22" fill="#ff0000"/>
<rect x="1200" y="661" width="1" height="33" fill="#ff0000"/>
<rect x="1198" y="662" width="5" height="31" fill="#ff0000"/>
<rect x="1208" y="660" width="1" height="11" fill="#ff0000"/>
<rect x="1206" y="661" width="5" height="3" fill="#ff0000"/>
<rect x="1216" y="651" width="1" height="26" fill="#00bfff"/>
<rect x="1214" y="662" width="5" height="5" fill="#00bfff"/>
<rect x="1224" y="636" width="1" height="35" fill="#ff0000"/>
<rect x="1222" y="644" width="5" height="25" fill="#ff0000"/>
<rect x="1232" y="616" width="1" height="31" fill="#ff0000"/>
<rect x="1230" y="618" width="5" height="28" fill="#ff0000"/>
<rect x="1240" y="613" width="1" height="24" fill="#00bfff"/>
<rect x="1238" y="622" width="5" height="11" fill="#00bfff"/>
<rect x="1248" y="619" width="1" height="17" fill="#ff0000"/>
<rect x="1246" y="625" width="5" height="11" fill="#ff0000"/>
<rect x="1256" y="622" width="1" height="22" fill="#00bfff"/>
<rect x="1254" y="628" width="5" height="15" fill="#00bfff"/>
<rect x="1264" y="633" width="1" height="19" fill="#00bfff"/>
<rect x="1262" y="642" width="5" height="4" fill="#00bfff"/>
<rect x="1272" y="640" width="1" height="21" fill="#00bfff"/>
<rect x="1270" y="648" width="5" height="10" fill="#00bfff"/>
<rect x="1280" y="649" width="1" height="25" fill="#00bfff"/>
<rect x="1278" y="659" width="5" height="14" fill="#00bfff"/>
<rect x="1288" y="629" width="1" height="51" fill="#ff0000"/>
<rect x="1286" y="635" width="5" height="39" fill="#ff0000"/>
<rect x="1296" y="635" width="1" height="27" fill="#00bfff"/>
<rect x="1294" y="639" width="5" height="21" fill="#00bfff"/>
<rect x="1304" y="646" width="1" height="20" fill="#ff0000"/>
<rect x="1302" y="652" width="5" height="9" fill="#ff0000"/>
<rect x="1312" y="642" width="1" height="29" fill="#ff0000"/>
<rect x="1310" y="643" width="5" height="9" fill="#ff0000"/>
<rect x="1320" y="633" width="1" height="17" fill="#ff0000"/>
<rect x="1318" y="640" width="5" height="7" fill="#ff0000"/>
<rect x="1328" y="637" width="1" height="25" fill="#00bfff"/>
<rect x="1326" y="641" width="5" height="2" fill="#00bfff"/>
<rect x="1336" y="627" width="1" height="21" fill="#ff0000"/>
<rect x="1334" y="629" width="5" height="19" fill="#ff0000"/>
<rect x="1344" y="627" width="1" height="70" fill="#00bfff"/>
<rect x="1342" y="630" width="5" height="48" fill="#00bfff"/>
<rect x="1352" y="657" width="1" height="41" fill="#ff0000"/>
<rect x="1350" y="661" width="5" height="20" fill="#ff0000"/>
<rect x="1360" y="657" width="1" height="15" fill="#00bfff"/>
<rect x="1358" y="663" width="5" height="3" fill="#00bfff"/>
<rect x="1368" y="625" width="1" height="45" fill="#ff0000"/>
<rect x="1366" y="641" width="5" height="27" fill="#ff0000"/>
<rect x="1376" y="625" width="1" height="24" fill="#ff0000"/>
<rect x="1374" y="629" width="5" height="17" fill="#ff0000"/>
<rect x="1384" y="614" width="1" height="24" fill="#00bfff"/>
<rect x="1382" y="628" width="5" height="8" fill="#00bfff"/>
<rect x="1392" y="623" width="1" height="17" fill="#ff0000"/>
<rect x="1390" y="633" width="5" height="5" fill="#ff0000"/>
<rect x="1400" y="616" width="1" height="32" fill="#ff0000"/>
<rect x="1398" y="620" width="5" height="16" fill="#ff0000"/>
<rect x="1408" y="617" width="1" height="20" fill="#00bfff"/>
<rect x="1406" y="622" width="5" height="3" fill="#00bfff"/>
<rect x="1416" y="604" width="1" height="27" fill="#ff0000"/>
<rect x="1414" y="612" width="5" height="17" fill="#ff0000"/>
<rect x="1424" y="587" width="1" height="27" fill="#ff0000"/>
<rect x="1422" y="596" width="5" height="15" fill="#ff0000"/>
<rect x="1432" y="569" width="1" height="36" fill="#00bfff"/>
<rect x="1430" y="596" width="5" height="8" fill="#00bfff"/>
<rect x="1440" y="591" width="1" height="42" fill="#00bfff"/>
<rect x="1438" y="604" width="5" height="23" fill="#00bfff"/>
<rect x="1448" y="624" width="1" height="33" fill="#00bfff"/>
<rect x="1446" y="626" width="5" height="27" fill="#00bfff"/>
<rect x="1456" y="652" width="1" height="6" fill="#ff0000"/>
<rect x="1454" y="656" width="5" height="1" fill="#ff0000"/>
<rect x="0" y="117" width="1845" height="1" fill="#0000ff"/>
<rect x="0" y="612" width="1845" height="1" fill="#0000ff"/>
<rect x="0" y="638" width="1845" height="1" fill="#ffff00"/>
</g>
<polyline points="1212.6,259.4 1214.9,248.3 1220.4,238.1 1227.8,225.1 1236.2,202.8 1239.9,198.2 1242.7,202.8 1246.4,217.7 1251.0,226.0 1254.8,228.8 1261.3,215.8 1268.7,191.7 1274.3,171.3 1279.8,156.4 1282.6,151.8 1287.2,155.5 1292.8,167.5 1295.6,173.1 1300.2,165.7 1307.7,152.7 1315.1,141.6 1322.5,130.4 1328.1,123.0 1333.7,130.4 1338.6,140.0 1344.9,146.4 1347.8,141.7 1350.7,128.4 1353.6,103.5 1359.4,112.2 1366.4,120.3 1376.8,130.7 1382.6,141.2 1387.3,155.1 1391.9,146.4 1405.8,128.4 1408.7,120.9 1412.8,120.9 1417.4,124.9 1422.1,128.4 1426.7,129.6 1434.8,132.1 1442.4,122.6" fill="none" stroke="#fff000" stroke-width="2.7" stroke-linejoin="round" stroke-linecap="round" />
<polyline points="1117.4,622.1 1123.2,639.7 1132.6,663.1 1142.0,693.6 1145.5,710.0 1146.7,735.8 1150.9,747.5 1160.7,728.7 1171.3,705.3 1178.3,708.8 1184.2,720.6 1191.2,692.5 1198.3,663.2 1204.1,650.3 1210.0,660.9 1217.7,673.7 1225.2,646.8 1234.1,626.4 1244.0,636.2 1253.3,648.0 1263.9,653.8 1274.4,667.2 1290.8,638.6 1297.9,650.3 1309.6,663.9 1322.5,644.4 1335.4,630.4 1344.7,657.3 1354.1,687.8 1367.0,667.9 1373.8,637.1 1377.9,629.8 1384.0,620.1 1392.5,625.8 1399.8,632.3 1407.1,626.6 1413.6,616.8 1422.5,607.1 1425.8,595.7 1428.2,580.3 1431.5,575.4 1438.0,586.0 1442.8,605.5 1446.9,625.0 1450.1,652.6" fill="none" stroke="#fff000" stroke-width="2.7" stroke-linejoin="round" stroke-linecap="round" />
<polyline points="1455.6,651.8 1455.8,648.8 1459.0,646.2 1465.4,641.5 1465.6,642.0 1473.7,642.0 1480.2,646.9 1490.0,659.9 1497.2,674.5" fill="none" stroke="#ff0a85" stroke-width="2.6" stroke-linejoin="round" stroke-linecap="round" />
<g shape-rendering="crispEdges">
<rect x="0" y="405" width="1846" height="1" fill="#fff"/>
<rect x="1845" y="0" width="1" height="406" fill="#fff"/>
<rect x="1844" y="247" width="3" height="101" fill="#fff"/>
<rect x="0" y="429" width="1904" height="2" fill="#fff"/>
<rect x="0" y="431" width="1904" height="1" fill="#d0d0d0"/>
<rect x="0" y="432" width="1904" height="1" fill="#707070"/>
<rect x="0" y="436" width="1" height="1" fill="#00c000"/>
<rect x="0" y="435" width="1846" height="1" fill="#fff"/>
<rect x="1845" y="435" width="1" height="408" fill="#fff"/>
<rect x="0" y="842" width="1846" height="1" fill="#fff"/>
<rect x="1844" y="476" width="3" height="115" fill="#fff"/>
</g>
<g shape-rendering="crispEdges">
<rect x="1846" y="43" width="3" height="1" fill="#fff"/>
<text x="1852.03" y="47.8" textLength="45.92" lengthAdjust="spacingAndGlyphs" fill="#fff">1.41333</text>
<rect x="1846" y="93" width="3" height="1" fill="#fff"/>
<text x="1852.03" y="97.2" textLength="45.92" lengthAdjust="spacingAndGlyphs" fill="#fff">1.37763</text>
<rect x="1846" y="141" width="3" height="1" fill="#fff"/>
<text x="1852.03" y="145.6" textLength="45.92" lengthAdjust="spacingAndGlyphs" fill="#fff">1.34193</text>
<rect x="1846" y="191" width="3" height="1" fill="#fff"/>
<text x="1852.03" y="195.2" textLength="45.92" lengthAdjust="spacingAndGlyphs" fill="#fff">1.30693</text>
<rect x="1846" y="240" width="3" height="1" fill="#fff"/>
<text x="1852.03" y="244.6" textLength="45.92" lengthAdjust="spacingAndGlyphs" fill="#fff">1.27123</text>
<rect x="1846" y="288" width="3" height="1" fill="#fff"/>
<text x="1852.03" y="293.1" textLength="45.92" lengthAdjust="spacingAndGlyphs" fill="#fff">1.23553</text>
<rect x="1846" y="338" width="3" height="1" fill="#fff"/>
<text x="1852.03" y="342.2" textLength="45.92" lengthAdjust="spacingAndGlyphs" fill="#fff">1.19983</text>
<rect x="1846" y="386" width="3" height="1" fill="#fff"/>
<text x="1852.03" y="390.8" textLength="45.92" lengthAdjust="spacingAndGlyphs" fill="#fff">1.16413</text>
<rect x="1846" y="481" width="3" height="1" fill="#fff"/>
<text x="1852.03" y="485.4" textLength="45.92" lengthAdjust="spacingAndGlyphs" fill="#fff">1.39986</text>
<rect x="1846" y="530" width="3" height="1" fill="#fff"/>
<text x="1852.03" y="534.4" textLength="45.92" lengthAdjust="spacingAndGlyphs" fill="#fff">1.38486</text>
<rect x="1846" y="579" width="3" height="1" fill="#fff"/>
<text x="1852.03" y="583.6" textLength="45.92" lengthAdjust="spacingAndGlyphs" fill="#fff">1.36986</text>
<rect x="1846" y="627" width="3" height="1" fill="#fff"/>
<text x="1852.03" y="632.0" textLength="45.92" lengthAdjust="spacingAndGlyphs" fill="#fff">1.35516</text>
<rect x="1846" y="677" width="3" height="1" fill="#fff"/>
<text x="1852.03" y="681.2" textLength="45.92" lengthAdjust="spacingAndGlyphs" fill="#fff">1.34016</text>
<rect x="1846" y="726" width="3" height="1" fill="#fff"/>
<text x="1852.03" y="730.2" textLength="45.92" lengthAdjust="spacingAndGlyphs" fill="#fff">1.32516</text>
<rect x="1846" y="774" width="3" height="1" fill="#fff"/>
<text x="1852.03" y="779.0" textLength="45.92" lengthAdjust="spacingAndGlyphs" fill="#fff">1.31016</text>
<rect x="1846" y="823" width="3" height="1" fill="#fff"/>
<text x="1852.03" y="827.6" textLength="45.92" lengthAdjust="spacingAndGlyphs" fill="#fff">1.29516</text>
<rect x="0" y="406" width="1" height="3" fill="#fff"/>
<text x="-0.11" y="421" textLength="68.21" lengthAdjust="spacingAndGlyphs" fill="#fff">27 Mar 2022</text>
<rect x="96" y="406" width="1" height="3" fill="#fff"/>
<text x="95.04" y="421" textLength="69.39" lengthAdjust="spacingAndGlyphs" fill="#fff">19 Jun 2022</text>
<rect x="192" y="406" width="1" height="3" fill="#fff"/>
<text x="191.03" y="421" textLength="71.10" lengthAdjust="spacingAndGlyphs" fill="#fff">11 Sep 2022</text>
<rect x="288" y="406" width="1" height="3" fill="#fff"/>
<text x="287.71" y="421" textLength="63.91" lengthAdjust="spacingAndGlyphs" fill="#fff">4 Dec 2022</text>
<rect x="384" y="406" width="1" height="3" fill="#fff"/>
<text x="383.38" y="421" textLength="69.66" lengthAdjust="spacingAndGlyphs" fill="#fff">26 Feb 2023</text>
<rect x="480" y="406" width="1" height="3" fill="#fff"/>
<text x="479.38" y="421" textLength="71.15" lengthAdjust="spacingAndGlyphs" fill="#fff">21 May 2023</text>
<rect x="576" y="406" width="1" height="3" fill="#fff"/>
<text x="575.03" y="421" textLength="72.04" lengthAdjust="spacingAndGlyphs" fill="#fff">13 Aug 2023</text>
<rect x="672" y="406" width="1" height="3" fill="#fff"/>
<text x="671.50" y="421" textLength="64.05" lengthAdjust="spacingAndGlyphs" fill="#fff">5 Nov 2023</text>
<rect x="768" y="406" width="1" height="3" fill="#fff"/>
<text x="767.39" y="421" textLength="66.96" lengthAdjust="spacingAndGlyphs" fill="#fff">28 Jan 2024</text>
<rect x="864" y="406" width="1" height="3" fill="#fff"/>
<text x="863.36" y="421" textLength="68.51" lengthAdjust="spacingAndGlyphs" fill="#fff">21 Apr 2024</text>
<rect x="960" y="406" width="1" height="3" fill="#fff"/>
<text x="959.07" y="421" textLength="63.28" lengthAdjust="spacingAndGlyphs" fill="#fff">14 Jul 2024</text>
<rect x="1056" y="406" width="1" height="3" fill="#fff"/>
<text x="1055.35" y="421" textLength="62.02" lengthAdjust="spacingAndGlyphs" fill="#fff">6 Oct 2024</text>
<rect x="1152" y="406" width="1" height="3" fill="#fff"/>
<text x="1151.38" y="421" textLength="69.97" lengthAdjust="spacingAndGlyphs" fill="#fff">29 Dec 2024</text>
<rect x="1248" y="406" width="1" height="3" fill="#fff"/>
<text x="1247.38" y="421" textLength="69.13" lengthAdjust="spacingAndGlyphs" fill="#fff">23 Mar 2025</text>
<rect x="1344" y="406" width="1" height="3" fill="#fff"/>
<text x="1343.04" y="421" textLength="69.49" lengthAdjust="spacingAndGlyphs" fill="#fff">15 Jun 2025</text>
<rect x="1440" y="406" width="1" height="3" fill="#fff"/>
<text x="1439.37" y="421" textLength="63.14" lengthAdjust="spacingAndGlyphs" fill="#fff">7 Sep 2025</text>
<rect x="0" y="843" width="1" height="3" fill="#fff"/>
<text x="-0.08" y="858" textLength="60.59" lengthAdjust="spacingAndGlyphs" fill="#fff">9 Jan 2025</text>
<rect x="96" y="843" width="1" height="3" fill="#fff"/>
<text x="95.39" y="858" textLength="67.63" lengthAdjust="spacingAndGlyphs" fill="#fff">27 Jan 2025</text>
<rect x="192" y="843" width="1" height="3" fill="#fff"/>
<text x="191.05" y="858" textLength="70.48" lengthAdjust="spacingAndGlyphs" fill="#fff">12 Feb 2025</text>
<rect x="288" y="843" width="1" height="3" fill="#fff"/>
<text x="287.38" y="858" textLength="69.64" lengthAdjust="spacingAndGlyphs" fill="#fff">28 Feb 2025</text>
<rect x="384" y="843" width="1" height="3" fill="#fff"/>
<text x="383.05" y="858" textLength="69.97" lengthAdjust="spacingAndGlyphs" fill="#fff">18 Mar 2025</text>
<rect x="480" y="843" width="1" height="3" fill="#fff"/>
<text x="479.51" y="858" textLength="62.03" lengthAdjust="spacingAndGlyphs" fill="#fff">3 Apr 2025</text>
<rect x="576" y="843" width="1" height="3" fill="#fff"/>
<text x="575.36" y="858" textLength="68.68" lengthAdjust="spacingAndGlyphs" fill="#fff">21 Apr 2025</text>
<rect x="672" y="843" width="1" height="3" fill="#fff"/>
<text x="671.37" y="858" textLength="64.15" lengthAdjust="spacingAndGlyphs" fill="#fff">7 May 2025</text>
<rect x="768" y="843" width="1" height="3" fill="#fff"/>
<text x="767.39" y="858" textLength="70.62" lengthAdjust="spacingAndGlyphs" fill="#fff">23 May 2025</text>
<rect x="864" y="843" width="1" height="3" fill="#fff"/>
<text x="863.05" y="858" textLength="68.98" lengthAdjust="spacingAndGlyphs" fill="#fff">10 Jun 2025</text>
<rect x="960" y="843" width="1" height="3" fill="#fff"/>
<text x="959.37" y="858" textLength="69.15" lengthAdjust="spacingAndGlyphs" fill="#fff">26 Jun 2025</text>
<rect x="1056" y="843" width="1" height="3" fill="#fff"/>
<text x="1055.06" y="858" textLength="63.96" lengthAdjust="spacingAndGlyphs" fill="#fff">14 Jul 2025</text>
<rect x="1152" y="843" width="1" height="3" fill="#fff"/>
<text x="1151.53" y="858" textLength="63.48" lengthAdjust="spacingAndGlyphs" fill="#fff">30 Jul 2025</text>
<rect x="1248" y="843" width="1" height="3" fill="#fff"/>
<text x="1247.03" y="858" textLength="72.01" lengthAdjust="spacingAndGlyphs" fill="#fff">15 Aug 2025</text>
<rect x="1344" y="843" width="1" height="3" fill="#fff"/>
<text x="1343.37" y="858" textLength="64.15" lengthAdjust="spacingAndGlyphs" fill="#fff">2 Sep 2025</text>
<rect x="1440" y="843" width="1" height="3" fill="#fff"/>
<text x="1439.05" y="858" textLength="70.98" lengthAdjust="spacingAndGlyphs" fill="#fff">18 Sep 2025</text>
</g>
<rect x="1847" y="111" width="56" height="14" fill="#0000ff"/><text x="1852.03" y="122.6" textLength="45.92" lengthAdjust="spacingAndGlyphs" fill="#0b0b2b">1.35966</text>
<rect x="1847" y="129" width="56" height="14" fill="#ffffff"/><text x="1852.04" y="140.6" textLength="45.90" lengthAdjust="spacingAndGlyphs" fill="#0b0b2b">1.34625</text>
<rect x="1847" y="606" width="56" height="14" fill="#0000ff"/><text x="1852.03" y="617.6" textLength="45.92" lengthAdjust="spacingAndGlyphs" fill="#0b0b2b">1.35966</text>
<rect x="1847" y="632" width="56" height="14" fill="#ffff00"/><text x="1852.03" y="643.6" textLength="46.00" lengthAdjust="spacingAndGlyphs" fill="#0b0b2b">1.35167</text>
<rect x="1847" y="649" width="56" height="14" fill="#ffffff"/><text x="1852.04" y="660.6" textLength="45.90" lengthAdjust="spacingAndGlyphs" fill="#0b0b2b">1.34625</text>
<path d="M3,6 L12,6 L7.5,11 Z" fill="#fff"/>
<text x="17.71" y="13" textLength="113.12" lengthAdjust="spacingAndGlyphs" fill="#fff">GBPUSD.raw,Weekly</text>
<text x="138.72" y="13" textLength="46.74" lengthAdjust="spacingAndGlyphs" fill="#fff">1.34608</text><text x="188.63" y="13" textLength="45.93" lengthAdjust="spacingAndGlyphs" fill="#fff">1.34744</text><text x="238.73" y="13" textLength="46.23" lengthAdjust="spacingAndGlyphs" fill="#fff">1.34573</text><text x="288.42" y="13" textLength="46.72" lengthAdjust="spacingAndGlyphs" fill="#fff">1.34625</text>
<path d="M3,443 L12,443 L7.5,448 Z" fill="#fff"/>
<text x="17.63" y="450" textLength="97.09" lengthAdjust="spacingAndGlyphs" fill="#fff">GBPUSD.raw,Daily</text>
<text x="122.42" y="450" textLength="46.63" lengthAdjust="spacingAndGlyphs" fill="#fff">1.34608</text><text x="172.74" y="450" textLength="45.62" lengthAdjust="spacingAndGlyphs" fill="#fff">1.34744</text><text x="222.63" y="450" textLength="46.23" lengthAdjust="spacingAndGlyphs" fill="#fff">1.34573</text><text x="272.52" y="450" textLength="46.52" lengthAdjust="spacingAndGlyphs" fill="#fff">1.34625</text>
<g id="toolbar">
<circle cx="1758.2" cy="182.3" r="21" fill="#000"/>
<path d="M1753,167.8 L1763.4,167.8 L1770.6,180.5 C1767,186 1764.2,192 1762.8,198.6 L1753.6,198.6 C1752.2,192 1749.4,186 1745.8,180.5 Z" fill="#fff"/>
<circle cx="1758.2" cy="179.6" r="3.9" fill="#000"/>
<rect x="1757.4" y="181" width="1.7" height="18" fill="#000"/>
<rect x="1737" y="212" width="42" height="530" fill="#ffffff"/>
<rect x="1739" y="215" width="1" height="450" fill="#e4e8e4"/>
<rect x="1739" y="215" width="38" height="74.5" fill="#35bde8"/>
<rect x="1740" y="251.5" width="37" height="1" fill="#5ccbee"/>
<rect x="1740" y="327" width="37" height="1" fill="#e2f5e2"/>
<rect x="1740" y="552" width="37" height="1" fill="#e2f5e2"/>
<!-- eye -->
<path d="M1744,233 Q1758.3,215 1772.8,233 Q1758.3,251 1744,233 Z" fill="#fff" stroke="#222" stroke-width="1.6"/>
<circle cx="1758.3" cy="232.8" r="7.6" fill="#fff" stroke="#222" stroke-width="1.3"/>
<circle cx="1758.3" cy="232.8" r="5.4" fill="#2a2a2a"/>
<!-- arrow -->
<path d="M1745,258.7 L1771,266.6 L1762.3,270.4 L1770.2,278.3 L1766.8,281.6 L1758.9,273.7 L1754,283.4 Z" fill="#fff" stroke="#222" stroke-width="1.5" stroke-linejoin="round"/>
<path d="M1777,281.3 L1777,289.4 L1768.9,289.4 Z" fill="#222"/>
<!-- stopwatch -->
<circle cx="1757.9" cy="310.9" r="10.4" fill="#fff" stroke="#2a2a2a" stroke-width="2.1"/>
<circle cx="1757.9" cy="310.9" r="7.9" fill="none" stroke="#333" stroke-width="1.5"/>
<rect x="1754.8" y="295.3" width="6.2" height="3.2" rx="1" fill="#fff" stroke="#333" stroke-width="1.3"/>
<rect x="1757.2" y="298.5" width="1.6" height="1.5" fill="#333"/>
<path d="M1747.6,302.2 L1750,299.8 M1766.6,301.4 L1768.4,303" stroke="#333" stroke-width="1.3"/>
<path d="M1757.9,304.5 L1757.9,306 M1758.5,311 L1758.2,312.5" stroke="#555" stroke-width="1"/>
<path d="M1745.4,320.4 L1771,295.8" stroke="#2a2a2a" stroke-width="2"/>
<path d="M1777,319 L1777,326.6 L1769.4,326.6 Z" fill="#222"/>
<!-- crayon -->
<path d="M1743.3,333.8 L1754.7,333.8 L1771.6,350.2 L1760.7,360.6 L1743.3,345.2 Z" fill="#fafafa" stroke="#2e2e2e" stroke-width="1.6" stroke-linejoin="round"/>
<path d="M1744.5,344.5 L1751.3,350.5 L1756.6,355.8 L1766.8,346.6 L1755.2,339.6 L1751.5,340.5 L1750.5,345.2 Z" fill="#e4e4e4"/>
<path d="M1744.8,345.2 L1750.5,345.2 L1751.5,340.5 L1755.2,339.6 L1754.7,334.3 M1751.5,340.5 L1763.2,352.2 M1755.2,339.6 L1766,349.6 M1756.6,355.8 L1766.8,346.6 M1758.4,357 L1768.4,348" fill="none" stroke="#2e2e2e" stroke-width="1.3" stroke-linejoin="round"/>
<path d="M1743.3,333.8 L1750.3,333.8 L1743.3,340.6 Z" fill="#222"/>
<path d="M1777,356.3 L1777,364.4 L1768.9,364.4 Z" fill="#222"/>
<!-- line tool -->
<path d="M1746.2,370.8 L1769.4,394.6" stroke="#333" stroke-width="3.4" stroke-linecap="round"/>
<path d="M1746.2,370.8 L1769.4,394.6" stroke="#fff" stroke-width="1.3" stroke-linecap="round"/>
<circle cx="1772" cy="372.6" r="5" fill="#ff0a85"/>
<path d="M1777,394 L1777,401.6 L1769.4,401.6 Z" fill="#222"/>
<!-- eraser -->
<g transform="translate(1757.8,420.4) rotate(45)">
<rect x="-9.2" y="-8.2" width="21.6" height="16" rx="1" fill="#e8e8e8" stroke="#2e2e2e" stroke-width="1.5"/>
<rect x="-9.2" y="0.3" width="21.6" height="7.5" fill="#d8d8d8"/>
<path d="M-9.2,0.3 L12.4,0.3" stroke="#2e2e2e" stroke-width="1.3"/>
<rect x="-15.3" y="-7.4" width="6.1" height="14.6" rx="1" fill="#f2f2f2" stroke="#2e2e2e" stroke-width="1.5"/>
<path d="M-15.3,-0.5 L-9.2,-0.5" stroke="#2e2e2e" stroke-width="1.2"/>
<rect x="12.4" y="-7" width="3" height="14" fill="#fff" stroke="#2e2e2e" stroke-width="1.2"/>
</g>
<circle cx="1757.8" cy="458.6" r="3.3" fill="#2a2a2a"/>
<!-- undo -->
<path d="M1743.7,492.6 L1754.3,484.5 L1754.3,490.2 L1761.5,490.2 C1767.5,490.2 1771.3,494 1771.3,499 C1771.3,504.5 1767,508.5 1761,508.5 L1759.5,508.5 L1759.5,502.5 L1761,502.5 C1763.5,502.5 1765.5,501 1765.5,499 C1765.5,497 1763.5,495.9 1761,495.9 L1754.3,495.9 L1754.3,501.5 Z" fill="#fff" stroke="#333" stroke-width="1.5" stroke-linejoin="round"/>
<!-- trash -->
<rect x="1754.5" y="520.3" width="7.5" height="3" rx="1" fill="#fff" stroke="#444" stroke-width="1.2"/>
<rect x="1747.5" y="523" width="21.4" height="5" rx="1.5" fill="#f0f0f0" stroke="#444" stroke-width="1.5"/>
<path d="M1749.5,528 L1750.5,543 L1766,543 L1767,528" fill="#eaeaea" stroke="#444" stroke-width="1.5"/>
<path d="M1754.3,529 L1754.3,542 M1762.3,529 L1762.3,542" stroke="#444" stroke-width="1.2"/>
<rect x="1749.5" y="542.5" width="17.5" height="3.3" rx="1" fill="#fff" stroke="#444" stroke-width="1.2"/>
<!-- easel -->
<rect x="1753.4" y="557.5" width="8.5" height="3.5" rx="1" fill="#fff" stroke="#444" stroke-width="1.2"/>
<rect x="1746.2" y="561" width="22.4" height="15" rx="2" fill="#fff" stroke="#444" stroke-width="1.5"/>
<rect x="1749.3" y="564" width="16.4" height="9" fill="#ddd" stroke="#444" stroke-width="1"/>
<rect x="1749.5" y="576" width="16" height="3" fill="#fff" stroke="#444" stroke-width="1.2"/>
<path d="M1752.5,579 L1751.8,584.5 M1762.5,579 L1763.2,584.5" stroke="#444" stroke-width="2"/>
<circle cx="1772" cy="560" r="5" fill="#ff0a85"/>
<path d="M1777,581.3 L1777,590 L1768.9,590 Z" fill="#222"/>
<!-- camera -->
<rect x="1752.5" y="599.3" width="9.5" height="4" rx="1" fill="#fff" stroke="#444" stroke-width="1.4"/>
<rect x="1745" y="603" width="26.6" height="17.8" rx="2" fill="#fff" stroke="#444" stroke-width="1.6"/>
<circle cx="1755.3" cy="612.2" r="6.6" fill="#fff" stroke="#444" stroke-width="1.4"/>
<circle cx="1755.3" cy="612.2" r="4.8" fill="#333"/>
<circle cx="1756.5" cy="610.5" r="1.3" fill="#fff"/>
<circle cx="1766.7" cy="608.6" r="2" fill="#fff" stroke="#444" stroke-width="1"/>
<!-- clipboard -->
<rect x="1747.3" y="634.5" width="21.8" height="24" rx="2.5" fill="#fff" stroke="#444" stroke-width="1.6"/>
<path d="M1752.5,637.5 L1752.5,634.5 L1755.5,634.5 C1756,632 1760.5,632 1761,634.5 L1764,634.5 L1764,637.5 Z" fill="#fff" stroke="#444" stroke-width="1.3"/>
<path d="M1751.5,641.6 L1764.8,641.6 M1751.5,646.6 L1764.8,646.6 M1751.5,651.6 L1764.8,651.6" stroke="#444" stroke-width="1.3"/>
<!-- colors -->
<rect x="1739.9" y="664.9" width="18.1" height="18.8" fill="#00aeef"/>
<rect x="1758" y="664.9" width="18.8" height="18.8" fill="#ffed00"/>
<rect x="1739.9" y="683.7" width="18.1" height="18.4" fill="#ff0a80"/>
<rect x="1758" y="683.7" width="18.8" height="18.4" fill="#000"/>
<rect x="1739.9" y="702.1" width="36.9" height="37.5" fill="#ff0a80"/>
</g>

</svg>
</body></html>
